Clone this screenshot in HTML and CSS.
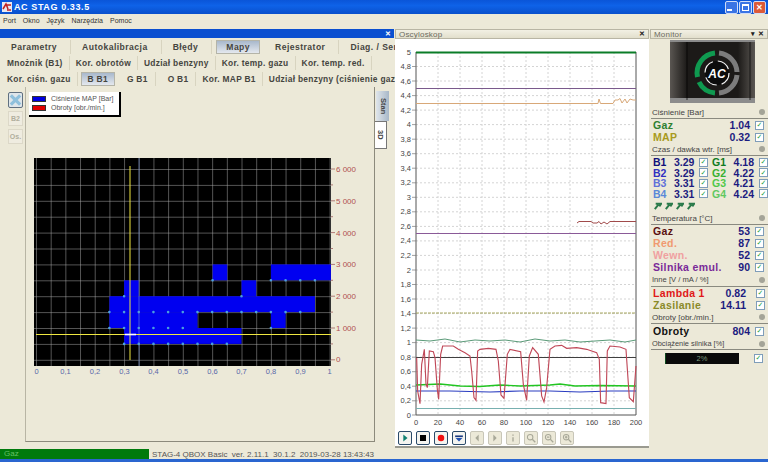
FILE: index.html
```html
<!DOCTYPE html>
<html lang="pl">
<head>
    <meta charset="UTF-8">
    <title>AC STAG 0.33.5</title>
    <link rel="stylesheet" href="styles.css">
</head>
<body>
<div class="window">
    <header class="titlebar">
        <svg class="app-icon" viewBox="0 0 10 10"><rect width="10" height="10" fill="#e8e8f0"/><path d="M1 7 L4 2 L6 7 M5 3 H9 M5 8 H9" stroke="#c02020" stroke-width="1.5" fill="none"/></svg>
        <span class="title-text">AC STAG 0.33.5</span>
        <div class="win-buttons">
            <span class="win-btn"><i class="glyph-min"></i></span>
            <span class="win-btn"><i class="glyph-max"></i></span>
            <span class="win-btn win-close">&#10005;</span>
        </div>
    </header>

    <nav class="menubar">
        <span>Port</span><span>Okno</span><span>Język</span><span>Narzędzia</span><span>Pomoc</span>
    </nav>

    <main class="workspace">
        <!-- mapy -->
        <section class="maps-panel">
            <div class="maps-head"><span class="close-x">&#10005;</span></div>
            <div class="tabs tabs-main">
                <span class="tab t-par">Parametry</span>
                <span class="tab t-auto">Autokalibracja</span>
                <span class="tab t-err">Błędy</span>
                <span class="tab tab-active t-map">Mapy</span>
                <span class="tab t-rej">Rejestrator</span>
                <span class="tab t-diag">Diag. / Serw.</span>
                <span class="help-btn">
                    <svg viewBox="0 0 12 12" width="12" height="12"><path d="M4 2 C8 3 8 5 6 6 C4 7 4 9 8 10" stroke="#208060" stroke-width="1.5" fill="none"/><path d="M8 2 C4 3 4 5 6 6" stroke="#3050b0" stroke-width="1" fill="none"/></svg>
                </span>
            </div>
            <div class="tabs tabs-sub">
                <span class="tab">Mnożnik (B1)</span>
                <span class="tab">Kor. obrotów</span>
                <span class="tab">Udział benzyny</span>
                <span class="tab">Kor. temp. gazu</span>
                <span class="tab">Kor. temp. red.</span>
            </div>
            <div class="tabs tabs-sub">
                <span class="tab plain">Kor. ciśn. gazu</span>
                <span class="tab tab-active t-bb">B B1</span>
                <span class="tab t-gb">G B1</span>
                <span class="tab t-ob">O B1</span>
                <span class="tab">Kor. MAP B1</span>
                <span class="tab">Udział benzyny (ciśnienie gazu)</span>
            </div>

            <div class="maps-body">
                <div class="side-tools">
                    <span class="tool tool-x">
                        <svg viewBox="0 0 14 14" width="14" height="14"><path d="M2 2 L12 12 M12 2 L2 12" stroke="#8fc0dc" stroke-width="3.4"/></svg>
                    </span>
                    <span class="tool">B2</span>
                    <span class="tool">Os.</span>
                </div>
                <div class="map-box">
                    <div class="legend">
                        <div class="legend-row"><i class="swatch swatch-blue"></i>Ciśnienie MAP [Bar]</div>
                        <div class="legend-row"><i class="swatch swatch-red"></i>Obroty [obr./min.]</div>
                    </div>
                    <svg class="map-chart" viewBox="26 150 349 230" width="349" height="230">
                        <defs>
                            <pattern id="mapGrid" patternUnits="userSpaceOnUse" x="36" y="170" width="14.68" height="15.9">
                                <path d="M0 0 H14.68 M0 0 V15.9" stroke="#a8a8a8" stroke-width="1" fill="none"/>
                            </pattern>
                        </defs>
                        <rect x="34" y="159" width="297" height="208" fill="#000"/>
                        <rect x="34" y="159" width="297" height="208" fill="url(#mapGrid)"/>
                        <g fill="#0000f0">
                            <rect x="212.6" y="265.4" width="14.7" height="15.9"/>
                            <rect x="270.9" y="265.4" width="60" height="15.9"/>
                            <rect x="124.1" y="281.3" width="14.7" height="15.9"/>
                            <rect x="241.5" y="281.3" width="14.7" height="15.9"/>
                            <rect x="109.4" y="297.2" width="205.6" height="15.9"/>
                            <rect x="109.4" y="313.1" width="88.1" height="15.9"/>
                            <rect x="270.9" y="313.1" width="14.7" height="15.9"/>
                            <rect x="124.1" y="329" width="117.4" height="15.9"/>
                        </g>
                        <g class="map-dots">
                            <path d="M212.6 281.3 H213 M270.9 281.3 H320"/>
                            <path d="M124.1 297.2 H125 M241.5 297.2 H242"/>
                            <path d="M109.4 313.1 H302"/>
                            <path d="M109.4 329 H183 M270.9 329 H271.5"/>
                            <path d="M124.1 344.9 H228"/>
                        </g>
                        <path d="M139 159 V367" stroke="#6f8fd0" stroke-width=".6"/>
                        <path d="M130 167 V361 M36 335.5 H331" stroke="#f0e840" stroke-width="1"/>
                        <path d="M125 335.5 H136" stroke="#fff" stroke-width="1.6"/>
                        <g class="map-ticks">
                            <path d="M331 170 h4 M331 185.9 h2 M331 201.8 h4 M331 217.7 h2 M331 233.6 h4 M331 249.5 h2 M331 265.4 h4 M331 281.3 h2 M331 297.2 h4 M331 313.1 h2 M331 329 h4 M331 344.9 h2 M331 360.8 h4"/>
                        </g>
                        <g class="map-y">
                            <text x="336" y="173">6 000</text>
                            <text x="336" y="205">5 000</text>
                            <text x="336" y="237">4 000</text>
                            <text x="336" y="268">3 000</text>
                            <text x="336" y="300">2 000</text>
                            <text x="336" y="332">1 000</text>
                            <text x="336" y="363">0</text>
                        </g>
                        <g class="map-x">
                            <text x="36.5" y="375">0</text>
                            <text x="65.5" y="375">0,1</text>
                            <text x="95" y="375">0,2</text>
                            <text x="124.5" y="375">0,3</text>
                            <text x="153.5" y="375">0,4</text>
                            <text x="183" y="375">0,5</text>
                            <text x="212.5" y="375">0,6</text>
                            <text x="241.5" y="375">0,7</text>
                            <text x="271" y="375">0,8</text>
                            <text x="300.5" y="375">0,9</text>
                            <text x="329.5" y="375">1</text>
                        </g>
                    </svg>
                </div>
                <div class="side-tabs">
                    <span class="vtab vtab-active">Stan</span>
                    <span class="vtab">3D</span>
                </div>
            </div>
        </section>

        <!-- oscyloskop -->
        <section class="scope-panel">
            <div class="dock-head"><span>Oscyloskop</span><span class="dock-btns">&#10005;</span></div>
            <div class="scope-body">
                <svg class="scope-chart" viewBox="395 38 253 391" width="253" height="391">
                    <g class="scope-grid">
                        <path d="M416 65.5 H636 M416 80 H636 M416 94.6 H636 M416 109.1 H636 M416 123.6 H636 M416 138.2 H636 M416 152.7 H636 M416 167.2 H636 M416 181.8 H636 M416 196.3 H636 M416 210.8 H636 M416 225.4 H636 M416 239.9 H636 M416 254.4 H636 M416 269 H636 M416 283.5 H636 M416 298 H636 M416 312.6 H636 M416 327.1 H636 M416 341.6 H636 M416 356.2 H636 M416 370.7 H636 M416 385.2 H636 M416 399.8 H636"/>
                        <path d="M438 51 V414 M460 51 V414 M482 51 V414 M504 51 V414 M526 51 V414 M548 51 V414 M570 51 V414 M592 51 V414 M614 51 V414"/>
                    </g>
                    <path d="M416 51 V414 H636 V51" fill="none" stroke="#555" stroke-width="1"/>
                    <path d="M412 65.5 h4 M412 80 h4 M412 94.6 h4 M412 109.1 h4 M412 123.6 h4 M412 138.2 h4 M412 152.7 h4 M412 167.2 h4 M412 181.8 h4 M412 196.3 h4 M412 210.8 h4 M412 225.4 h4 M412 239.9 h4 M412 254.4 h4 M412 269 h4 M412 283.5 h4 M412 298 h4 M412 312.6 h4 M412 327.1 h4 M412 341.6 h4 M412 356.2 h4 M412 370.7 h4 M412 385.2 h4 M412 399.8 h4 M412 414 h4" stroke="#777" stroke-width=".7"/>

                    <path d="M416 51.5 H636" stroke="#0b7d28" stroke-width="2"/>
                    <path d="M416 87.5 H636" stroke="#7a5a8c" stroke-width="1"/>
                    <path d="M416 102.5 H596 L598 102.5 L599 98 L600.5 102.5 H613 L615 99 H618 L620 97.5 L622 102 L625 98 L627 102 L630 98 L633 99 H636" stroke="#d8a878" stroke-width="1" fill="none"/>
                    <path d="M577 222 L579 220.5 H591 L593 222 H597 L599 220.5 L601 223 L604 221 L607 223 L610 220.5 H636" stroke="#a04a4a" stroke-width="1" fill="none"/>
                    <path d="M416 232.5 H636" stroke="#8a5a98" stroke-width="1"/>
                    <path d="M416 312 H636" stroke="#a8a860" stroke-width="1" stroke-dasharray="3 1"/>
                    <path d="M416 339 L430 340 L445 338 L460 341 L475 339 L490 340 L505 339 L520 341 L535 338 L550 340 L565 339 L580 341 L595 340 L610 339 L625 341 L636 339" stroke="#5a9a78" stroke-width="1" fill="none"/>
                    <path d="M416 356.5 H636" stroke="#404040" stroke-width="1"/>
                    <path d="M416 384 L440 383 L460 385 L480 385.5 L500 384 L520 385 L550 384 L560 383 L575 385 L600 384.5 L636 385" stroke="#22c522" stroke-width="1.4" fill="none"/>
                    <path d="M416 390 L450 390 L490 391 L520 390 L550 390 L580 391 L610 390 L636 390" stroke="#2a3cc0" stroke-width="1.2" fill="none"/>
                    <path d="M416 407.5 H636" stroke="#78b0b0" stroke-width="1"/>
                    <polyline transform="translate(390 320) scale(.3333)" fill="none" stroke="#c04858" stroke-width="3.4" points="80,110 83,210 90,248 95,130 103,85 108,190 112,200 118,90 130,92 135,110 142,205 146,235 152,100 158,75 190,75 205,85 225,95 240,105 245,150 252,230 258,238 263,90 270,85 295,82 318,85 325,120 333,222 342,232 352,100 360,85 392,92 400,190 410,238 418,105 428,80 445,100 455,225 462,243 470,200 480,85 495,75 515,73 530,82 560,80 590,85 620,95 628,115 632,245 648,248 652,90 660,75 690,78 708,85 718,230 730,242 738,135"/>

                    <g class="scope-y">
                        <text x="411" y="54">5</text><text x="411" y="68">4,8</text><text x="411" y="83">4,6</text><text x="411" y="97">4,4</text><text x="411" y="112">4,2</text><text x="411" y="126">4</text><text x="411" y="141">3,8</text><text x="411" y="155">3,6</text><text x="411" y="170">3,4</text><text x="411" y="184">3,2</text><text x="411" y="199">3</text><text x="411" y="213">2,8</text><text x="411" y="228">2,6</text><text x="411" y="242">2,4</text><text x="411" y="257">2,2</text><text x="411" y="272">2</text><text x="411" y="286">1,8</text><text x="411" y="301">1,6</text><text x="411" y="315">1,4</text><text x="411" y="330">1,2</text><text x="411" y="344">1</text><text x="411" y="359">0,8</text><text x="411" y="373">0,6</text><text x="411" y="388">0,4</text><text x="411" y="402">0,2</text><text x="411" y="417">0</text>
                    </g>
                    <g class="scope-x">
                        <text x="416" y="424">0</text><text x="438" y="424">20</text><text x="460" y="424">40</text><text x="482" y="424">60</text><text x="504" y="424">80</text><text x="526" y="424">100</text><text x="548" y="424">120</text><text x="570" y="424">140</text><text x="592" y="424">160</text><text x="614" y="424">180</text><text x="636" y="424">200</text>
                    </g>
                </svg>
                <div class="scope-tools">
                    <span class="sbtn"><svg viewBox="0 0 14 14"><path d="M5 3 L10 7 L5 11 Z" fill="#108070"/></svg></span>
                    <span class="sbtn"><svg viewBox="0 0 14 14"><rect x="3.5" y="3.5" width="7" height="7" fill="#000"/></svg></span>
                    <span class="sbtn"><svg viewBox="0 0 14 14"><circle cx="7" cy="7" r="3.8" fill="#f01010"/></svg></span>
                    <span class="sbtn"><svg viewBox="0 0 14 14"><path d="M2.5 4 H11.5 V6 H2.5 Z" fill="#1a3a80"/><path d="M3 7 H11 L7 11 Z" fill="#2050b0"/></svg></span>
                    <span class="sbtn sbtn-off"><svg viewBox="0 0 14 14"><path d="M9 3 L5 7 L9 11 Z" fill="#a8a898"/></svg></span>
                    <span class="sbtn sbtn-off"><svg viewBox="0 0 14 14"><path d="M5 3 L9 7 L5 11 Z" fill="#a8a898"/></svg></span>
                    <span class="sbtn sbtn-off"><svg viewBox="0 0 14 14"><path d="M7 3 V4.5 M7 6 V11" stroke="#a8a898" stroke-width="1.6"/></svg></span>
                    <span class="sbtn sbtn-off"><svg viewBox="0 0 14 14"><circle cx="6" cy="6" r="3.2" fill="none" stroke="#a8a898" stroke-width="1.2"/><path d="M8.5 8.5 L12 12" stroke="#a8a898" stroke-width="1.6"/></svg></span>
                    <span class="sbtn sbtn-off"><svg viewBox="0 0 14 14"><circle cx="6" cy="6" r="3.2" fill="none" stroke="#a8a898" stroke-width="1.2"/><path d="M8.5 8.5 L12 12 M4.5 6 H7.5" stroke="#a8a898" stroke-width="1.4"/></svg></span>
                    <span class="sbtn sbtn-off"><svg viewBox="0 0 14 14"><circle cx="6" cy="6" r="3.2" fill="none" stroke="#a8a898" stroke-width="1.2"/><path d="M8.5 8.5 L12 12 M4.5 6 H7.5 M6 4.5 V7.5" stroke="#a8a898" stroke-width="1.4"/></svg></span>
                </div>
            </div>
        </section>

        <!-- monitor -->
        <aside class="monitor">
            <div class="dock-head"><span>Monitor</span><span class="dock-btns">&#9662; &#10005;</span></div>
            <div class="logo-box">
                <svg viewBox="0 0 85 63" width="85" height="63">
                    <defs>
                        <linearGradient id="logoEdge" x1="0" x2="1" y1="0" y2="0">
                            <stop offset="0" stop-color="#5a5652"/>
                            <stop offset=".2" stop-color="#1c1a18"/>
                            <stop offset=".8" stop-color="#1c1a18"/>
                            <stop offset="1" stop-color="#5a5652"/>
                        </linearGradient>
                    </defs>
                    <rect width="85" height="63" fill="url(#logoEdge)"/>
                    <rect y="0" width="85" height="2" fill="#8a8a8a"/>
                    <rect y="58" width="85" height="5" fill="#8c8c8c"/>
                    <path d="M17 2 V60 M80 2 V60" stroke="#000" stroke-width=".7"/>
                    <g fill="none" stroke-width="5">
                        <path d="M45 13 A20 20 0 0 0 27.5 37 M29 42 A20 20 0 0 0 45 53" stroke="#0f9a50"/>
                        <path d="M49 13 A20 20 0 0 1 67 32 M67 35 A20 20 0 0 1 49 53" stroke="#7c7c7c"/>
                    </g>
                    <circle cx="47" cy="33" r="12" fill="#0c0c0c" stroke="#f0f0f0" stroke-width="1.2" stroke-dasharray="14 5"/>
                    <text class="logo-text" x="47" y="37.5">AC</text>
                </svg>
            </div>

            <div class="mon-head h-press">Ciśnienie [Bar]<i class="dot"></i></div>
            <div class="mon-row"><span class="c-gaz">Gaz</span><b>1.04</b><i class="chk">&#10003;</i></div>
            <div class="mon-row"><span class="c-map">MAP</span><b>0.32</b><i class="chk">&#10003;</i></div>

            <div class="mon-head h-press">Czas / dawka wtr. [ms]<i class="dot"></i></div>
            <div class="inj-grid">
                <span class="c-b1">B1</span><b>3.29</b><i class="chk">&#10003;</i><span class="c-g1">G1</span><b>4.18</b><i class="chk">&#10003;</i>
                <span class="c-b2">B2</span><b>3.29</b><i class="chk">&#10003;</i><span class="c-g2">G2</span><b>4.22</b><i class="chk">&#10003;</i>
                <span class="c-b3">B3</span><b>3.31</b><i class="chk">&#10003;</i><span class="c-g3">G3</span><b>4.21</b><i class="chk">&#10003;</i>
                <span class="c-b4">B4</span><b>3.31</b><i class="chk">&#10003;</i><span class="c-g4">G4</span><b>4.24</b><i class="chk">&#10003;</i>
            </div>
            <div class="inj-icons">
                <svg viewBox="0 0 10 10"><path d="M2 9 L6 4 M3 3 H9 L7 6" stroke="#2a7a4a" stroke-width="2.2" fill="none"/></svg>
                <svg viewBox="0 0 10 10"><path d="M2 9 L6 4 M3 3 H9 L7 6" stroke="#2a7a4a" stroke-width="2.2" fill="none"/></svg>
                <svg viewBox="0 0 10 10"><path d="M2 9 L6 4 M3 3 H9 L7 6" stroke="#2a7a4a" stroke-width="2.2" fill="none"/></svg>
                <svg viewBox="0 0 10 10"><path d="M2 9 L6 4 M3 3 H9 L7 6" stroke="#2a7a4a" stroke-width="2.2" fill="none"/></svg>
            </div>

            <div class="mon-head h-press">Temperatura [°C]<i class="dot"></i></div>
            <div class="mon-row"><span class="c-tgaz">Gaz</span><b>53</b><i class="chk">&#10003;</i></div>
            <div class="mon-row"><span class="c-red">Red.</span><b>87</b><i class="chk">&#10003;</i></div>
            <div class="mon-row"><span class="c-wewn">Wewn.</span><b>52</b><i class="chk">&#10003;</i></div>
            <div class="mon-row"><span class="c-emul">Silnika emul.</span><b>90</b><i class="chk">&#10003;</i></div>

            <div class="mon-head h-tall">Inne [V / mA / %]<i class="dot"></i></div>
            <div class="mon-row row-wide"><span class="c-lam">Lambda 1</span><b>0.82</b><i class="chk">&#10003;</i></div>
            <div class="mon-row row-wide"><span class="c-zas">Zasilanie</span><b>14.11</b><i class="chk">&#10003;</i></div>

            <div class="mon-head h-press">Obroty [obr./min.]<i class="dot"></i></div>
            <div class="mon-row row-rpm"><span class="c-rpm">Obroty</span><b>804</b><i class="chk">&#10003;</i></div>

            <div class="mon-head h-load">Obciążenie silnika [%]<i class="dot"></i></div>
            <div class="load-row">
                <div class="load-bar"><i class="load-fill" style="width:2%"></i><span>2%</span></div>
                <i class="chk">&#10003;</i>
            </div>
        </aside>
    </main>

    <footer class="statusbar">
        <span class="status-gas">Gaz</span>
        <span class="status-info">STAG-4 QBOX Basic&nbsp; ver. 2.11.1&nbsp; 30.1.2&nbsp; 2019-03-28 13:43:43</span>
    </footer>
    <div class="taskbar-edge"></div>
</div>
</body>
</html>
```

FILE: styles.css
```css
* {
    margin: 0;
    padding: 0;
    box-sizing: border-box;
}

html, body {
    width: 768px;
    height: 462px;
    overflow: hidden;
    background: #ece9d8;
    font-family: "Liberation Sans", Arial, sans-serif;
}

.window {
    display: grid;
    grid-template-rows: 14px 13px 422px 10px 3px;
    height: 462px;
}

/* title bar */
.titlebar {
    display: flex;
    align-items: center;
    background: linear-gradient(#0a55d8, #0e62e8 40%, #0a50cc);
    color: #fff;
    padding-left: 2px;
}

.app-icon {
    width: 10px;
    height: 10px;
    margin-right: 2px;
}

.title-text {
    font-size: 9px;
    font-weight: bold;
    letter-spacing: .6px;
}

.win-buttons {
    display: flex;
    gap: 1px;
    margin-left: auto;
    margin-right: 2px;
}

.win-btn {
    display: flex;
    align-items: center;
    justify-content: center;
    width: 13px;
    height: 13px;
    border: 1px solid #cfdcf8;
    border-radius: 2px;
    background: #3a74e4;
    color: #fff;
    font-size: 8px;
    font-weight: bold;
}

.win-close {
    background: #dc5a38;
}

.glyph-min {
    width: 5px;
    height: 2px;
    background: #fff;
    margin: 6px 4px 0 0;
}

.glyph-max {
    width: 7px;
    height: 7px;
    border: 1px solid #fff;
    border-top-width: 2px;
}

.menubar {
    display: flex;
    gap: 7px;
    align-items: center;
    padding-left: 3px;
    font-size: 7px;
    color: #333;
}

/* main area */
.workspace {
    display: grid;
    grid-template-columns: 394px 255px 119px;
    padding-top: 2px;
    min-height: 0;
}

.maps-panel {
    display: flex;
    flex-direction: column;
    min-width: 0;
}

.maps-head {
    display: flex;
    justify-content: flex-end;
    align-items: center;
    height: 9px;
    padding-right: 3px;
    background: #0a4fd0;
    color: #fff;
    font-size: 7px;
    font-weight: bold;
}

.tabs {
    display: flex;
    align-items: center;
    font-size: 8.4px;
    font-weight: bold;
    color: #45453f;
    letter-spacing: .3px;
}

.tabs-main {
    height: 16px;
    margin-top: 1px;
    padding-left: 0;
    font-size: 8.6px;
    letter-spacing: .45px;
}

.tabs-sub {
    height: 16px;
    padding-left: 1px;
}

.tab {
    padding: 0 6px;
    line-height: 14px;
    border-right: 1px solid #d8d4c0;
    white-space: nowrap;
}

.tabs-main .tab {
    padding: 0 13px 0 11px;
}

.tab-active {
    background: linear-gradient(#a8b8cc, #e4e8ee);
    border: 1px solid #b4b4a8;
    line-height: 12px;
}

.tabs-main .t-map {
    margin-left: 4px;
    padding: 0 9px;
    margin-right: 4px;
}

.t-diag {
    border-right: none !important;
}

.t-bb {
    margin: 0 0 0 3px;
    padding: 0 6px;
}

.t-gb, .t-ob {
    padding: 0 7px 0 12px;
}

.help-btn {
    display: flex;
    width: 14px;
    height: 14px;
    margin-left: -2px;
    border: 1px solid #8a9aa8;
    border-radius: 2px;
    background: #f4f4ee;
}

.maps-body {
    flex: 1;
    display: flex;
    min-height: 0;
    position: relative;
    margin-bottom: 7px;
}

.side-tools {
    width: 25px;
    padding: 5px 0 0 8px;
    display: flex;
    flex-direction: column;
    gap: 3px;
}

.tool {
    display: flex;
    align-items: center;
    justify-content: center;
    width: 15px;
    height: 15px;
    background: #efece0;
    border: 1px solid #dcd8c8;
    color: #b0ae9c;
    font-size: 7px;
    font-weight: bold;
}

.tool-x {
    height: 16px;
    background: #dfe6ea;
    border: 1px solid #607080;
    border-radius: 2px;
}

.map-box {
    width: 350px;
    position: relative;
    border-left: 1px solid #b8b5a4;
    border-right: 1px solid #8c8a7c;
    border-bottom: 1px solid #8c8a7c;
}

.legend {
    position: absolute;
    left: 3px;
    top: 5px;
    width: 90px;
    height: 23px;
    padding: 2px 3px;
    background: #fff;
    box-shadow: 1px 1px 0 1px #000;
    font-size: 7px;
    color: #555;
}

.legend-row {
    display: flex;
    align-items: center;
    height: 9px;
    white-space: nowrap;
}

.swatch {
    width: 14px;
    height: 6px;
    margin-right: 5px;
    border: 1px solid #333;
}

.swatch-blue {
    background: #0000e0;
}

.swatch-red {
    background: #e00000;
}

.map-chart {
    display: block;
    margin-top: 62px;
}

.map-dots path {
    fill: none;
    stroke: #4a9fe0;
    stroke-width: 2.6;
    stroke-linecap: round;
    stroke-dasharray: 0 14.68;
}

.map-ticks path {
    stroke: #a06060;
    stroke-width: .8;
}

.map-y text {
    font-size: 8px;
    fill: #b05050;
}

.map-x text {
    font-size: 7.5px;
    fill: #5868a8;
    text-anchor: middle;
}

.side-tabs {
    display: flex;
    flex-direction: column;
    padding-top: 4px;
}

.vtab {
    writing-mode: vertical-rl;
    width: 12px;
    height: 28px;
    border: 1px solid #777;
    border-left: none;
    background: #fff;
    font-size: 7.5px;
    font-weight: bold;
    color: #444;
    text-align: center;
    line-height: 11px;
}

.vtab-active {
    height: 30px;
    width: 13px;
    margin-left: 1px;
    border: none;
    background: linear-gradient(90deg, #dfe5ea, #a8b8c8);
}

/* dock panels */
.dock-head {
    display: flex;
    justify-content: space-between;
    align-items: center;
    height: 10px;
    padding: 0 3px;
    border: 1px solid #b8b5a4;
    background: linear-gradient(#f2f0e4, #e2dfcc);
    color: #6b6b60;
    font-size: 8px;
    letter-spacing: .2px;
}

.dock-btns {
    color: #222;
    font-size: 7px;
    font-weight: bold;
}

.scope-panel {
    display: flex;
    flex-direction: column;
    padding-left: 1px;
    min-width: 0;
}

.scope-body {
    height: 409px;
    background: #fff;
    border-bottom: 2px solid #9a9a90;
}

.scope-chart {
    display: block;
}

.scope-grid path {
    stroke: #d4d4d4;
    stroke-width: 1;
    stroke-dasharray: 2 2;
    fill: none;
}

.scope-y text {
    font-size: 7.5px;
    fill: #444;
    text-anchor: end;
}

.scope-x text {
    font-size: 7.5px;
    fill: #444;
    text-anchor: middle;
}

.scope-tools {
    display: flex;
    gap: 4px;
    padding-left: 3px;
    margin-top: 1px;
}

.sbtn {
    width: 14px;
    height: 14px;
    border: 1px solid #2a4a6a;
    border-radius: 2px;
    background: #f4f4f0;
}

.sbtn svg {
    display: block;
    width: 12px;
    height: 12px;
}

.sbtn-off {
    border-color: #c8c6b8;
    background: #ece9d8;
}

/* monitor */
.monitor {
    display: flex;
    flex-direction: column;
    padding-left: 1px;
    font-size: 10.5px;
}

.logo-box {
    display: flex;
    justify-content: flex-end;
    height: 67px;
    padding: 1px 13px 0 0;
}

.mon-head {
    display: flex;
    align-items: center;
    justify-content: space-between;
    margin-left: 1px;
    padding: 0 3px 0 1px;
    border-bottom: 1px solid #8a8a80;
    font-size: 8px;
    color: #444;
    white-space: nowrap;
}

.h-press {
    height: 13px;
}

.h-tall {
    height: 14px;
    font-size: 7.6px;
}

.h-load {
    height: 12px;
    font-size: 7.4px;
}

.dot {
    width: 6px;
    height: 6px;
    border-radius: 50%;
    background: #a4a498;
}

.mon-row {
    display: flex;
    align-items: center;
    height: 12px;
    padding-left: 3px;
    font-weight: bold;
    letter-spacing: .35px;
}

.mon-row b {
    margin-left: auto;
    color: #1c1c80;
    letter-spacing: 0;
}

.chk {
    display: flex;
    align-items: center;
    justify-content: center;
    width: 9px;
    height: 9px;
    margin: 0 4px 0 5px;
    border: 1px solid #7f9db9;
    background: #fff;
    color: #22a040;
    font: bold 7px "DejaVu Sans", sans-serif;
    letter-spacing: 0;
    flex: none;
}

.row-wide b {
    margin-right: 4px;
}

.row-wide .chk {
    margin-left: 6px;
    margin-right: 3px;
}

.row-rpm {
    height: 14px;
}

.inj-grid {
    display: grid;
    grid-template-columns: 21px 24px 14px 21px 21px 1fr;
    grid-auto-rows: 10.5px;
    align-items: center;
    height: 43px;
    padding: 1px 0 0 3px;
    font-weight: bold;
}

.inj-grid b {
    color: #1c1c80;
}

.inj-grid .chk {
    margin: 0 0 0 1px;
}

.inj-grid b:nth-of-type(even) {
    justify-self: end;
}

.inj-grid b:nth-of-type(even) + .chk {
    margin-left: 5px;
}

.inj-icons {
    display: flex;
    gap: 2px;
    height: 13px;
    align-items: center;
    padding-left: 3px;
}

.inj-icons svg {
    width: 9px;
    height: 9px;
}

.load-row {
    display: flex;
    align-items: center;
    height: 16px;
    padding-left: 15px;
}

.load-bar {
    position: relative;
    width: 74px;
    height: 11px;
    background: #0a0a0a;
    color: #7c9a7c;
    font-size: 7.5px;
    line-height: 11px;
    text-align: center;
}

.load-fill {
    position: absolute;
    left: 0;
    top: 0;
    height: 100%;
    background: #0c4a1c;
}

.load-bar span {
    position: relative;
}

.load-row .chk {
    margin-left: 15px;
}

.c-gaz { color: #2e8030; }
.c-map { color: #a89a20; }
.c-b1 { color: #10107a; }
.c-b2 { color: #3030c0; }
.c-b3 { color: #6070d8; }
.c-b4 { color: #5a88d8; }
.c-g1 { color: #107a20; }
.c-g2 { color: #38b030; }
.c-g3 { color: #50c848; }
.c-g4 { color: #60c860; }
.c-tgaz { color: #5a1010; }
.c-red { color: #f09a70; }
.c-wewn { color: #f0a0a0; }
.c-emul { color: #7a2a98; }
.c-lam { color: #e01818; }
.c-zas { color: #8a8a28; }
.c-rpm { color: #111; }

.logo-text {
    font-size: 12px;
    font-weight: bold;
    font-style: italic;
    fill: #fff;
    text-anchor: middle;
}

/* status */
.statusbar {
    display: flex;
    align-items: center;
    font-size: 8px;
    color: #555;
}

.status-gas {
    width: 149px;
    height: 100%;
    padding-left: 4px;
    background: #007a0c;
    color: #66c066;
    line-height: 10px;
}

.status-info {
    padding-left: 3px;
    white-space: nowrap;
}

.taskbar-edge {
    background: #2a66d0;
}
```
